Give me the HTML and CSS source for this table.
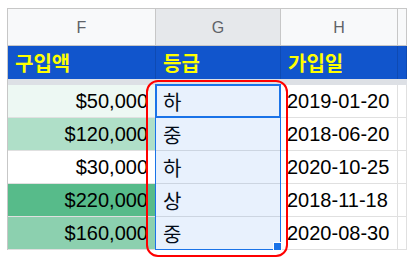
FILE: index.html
```html
<!DOCTYPE html>
<html lang="ko">
<head>
<meta charset="utf-8">
<link rel="stylesheet" href="styles.css">
</head>
<body>
<div class="sheet">
  <div class="row colhead">
    <div class="c">F</div>
    <div class="c picked">G</div>
    <div class="c">H</div>
    <div class="c"></div>
  </div>
  <div class="row title">
    <div class="c">구입액</div>
    <div class="c">등급</div>
    <div class="c">가입일</div>
    <div class="c"></div>
  </div>
  <div class="freeze"></div>
  <div class="body">
    <div class="row data">
      <div class="c num" style="background:#edf8f3">$50,000</div>
      <div class="c ko">하</div>
      <div class="c date">2019-01-20</div>
      <div class="c"></div>
    </div>
    <div class="row data">
      <div class="c num" style="background:#afdfc8">$120,000</div>
      <div class="c ko">중</div>
      <div class="c date">2018-06-20</div>
      <div class="c"></div>
    </div>
    <div class="row data">
      <div class="c num" style="background:#ffffff">$30,000</div>
      <div class="c ko">하</div>
      <div class="c date">2020-10-25</div>
      <div class="c"></div>
    </div>
    <div class="row data">
      <div class="c num" style="background:#57bb8a">$220,000</div>
      <div class="c ko">상</div>
      <div class="c date">2018-11-18</div>
      <div class="c"></div>
    </div>
    <div class="row data">
      <div class="c num" style="background:#8cd0af">$160,000</div>
      <div class="c ko">중</div>
      <div class="c date">2020-08-30</div>
      <div class="c"></div>
    </div>
    <div class="range"><div class="active"></div><div class="handle"></div></div>
    <div class="ring"></div>
  </div>
</div>
</body>
</html>
```

FILE: styles.css
```css
html, body {
  margin: 0;
  padding: 0;
  background: #ffffff;
}
body {
  width: 407px;
  height: 268px;
  overflow: hidden;
  font-family: "Liberation Sans", Arial, "Noto Sans CJK KR", sans-serif;
}
.sheet {
  margin: 8px 0 0 7px;
  border-left: 1px solid #c7c7c7;
}
.row {
  display: grid;
  grid-template-columns: 148px 125px 117px 1fr;
  box-sizing: border-box;
}
.c {
  box-sizing: border-box;
  border-right: 1px solid rgba(0, 0, 0, 0.12);
  display: flex;
  align-items: center;
  white-space: nowrap;
  overflow: hidden;
}
.colhead {
  height: 38px;
  border-top: 1px solid #c7c7c7;
  border-bottom: 1px solid #c7c7c7;
  background: #f8f9fa;
}
.colhead .c {
  justify-content: center;
  font-size: 16px;
  color: #5f6368;
  border-right: 1px solid #c7c7c7;
  padding-top: 1px;
}
.colhead .picked {
  background: #e6e8eb;
}
.title {
  height: 33px;
  background: #1155cc;
}
.title .c {
  font-family: "Noto Sans CJK KR", "Liberation Sans", sans-serif;
  font-weight: 700;
  font-size: 20px;
  color: #ffff00;
  padding-left: 7px;
}
.freeze {
  height: 6px;
  background: #dde0e5;
}
.body {
  position: relative;
}
.data {
  height: 33px;
  border-bottom: 1px solid rgba(0, 0, 0, 0.12);
}
.data .c {
  font-size: 20px;
  color: #000000;
}
.num {
  justify-content: flex-end;
  padding-right: 7px;
}
.ko {
  font-family: "Noto Sans CJK KR", sans-serif;
  padding-left: 7px;
}
.date {
  padding-left: 6px;
}
.range {
  position: absolute;
  left: 147px;
  top: -1px;
  width: 126px;
  height: 166px;
  box-sizing: border-box;
  border: 1px solid #1a73e8;
  background: rgba(26, 115, 232, 0.1);
}
.active {
  position: absolute;
  left: -1px;
  top: -1px;
  right: -1px;
  height: 34px;
  box-sizing: border-box;
  border: 2px solid #1a73e8;
}
.handle {
  position: absolute;
  right: -2px;
  bottom: -2px;
  width: 9px;
  height: 9px;
  box-sizing: border-box;
  background: #1a73e8;
  border: 1px solid #ffffff;
}
.ring {
  position: absolute;
  left: 138px;
  top: -5px;
  width: 142px;
  height: 177px;
  box-sizing: border-box;
  border: 2.5px solid #ff0000;
  border-radius: 12px;
}
```
